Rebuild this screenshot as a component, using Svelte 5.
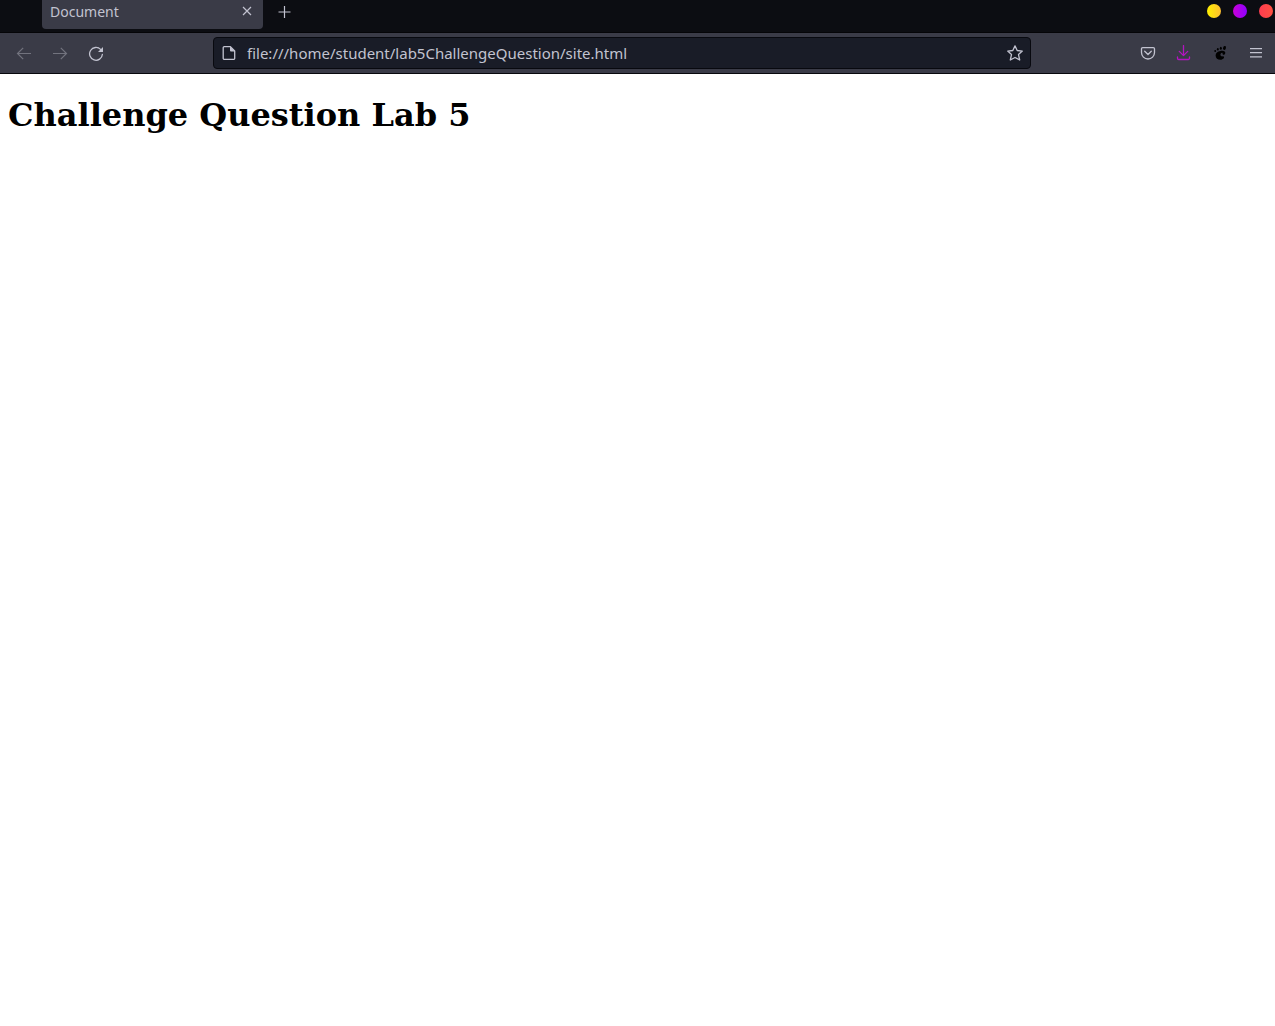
<script>
  let url = $state('file:///home/student/lab5ChallengeQuestion/site.html');
</script>

<svelte:head><title>Document</title></svelte:head>

<div class="browser">
  <header class="tabstrip">
    <div class="tab">
      <span class="title">Document</span>
      <button class="close" aria-label="Close tab">
        <svg width="16" height="16" viewBox="0 0 16 16"><path d="M4 4l8 8M12 4l-8 8" /></svg>
      </button>
    </div>
    <button class="newtab" aria-label="New tab">
      <svg width="16" height="16" viewBox="0 0 16 16"><path d="M8.500 2v12M2.500 8h12" /></svg>
    </button>
    <div class="window">
      <button class="dot min" aria-label="Minimize"></button>
      <button class="dot max" aria-label="Maximize"></button>
      <button class="dot quit" aria-label="Close window"></button>
    </div>
  </header>

  <nav class="toolbar">
    <div class="group">
      <button class="tool" disabled aria-label="Back">
        <svg width="16" height="16" viewBox="0 0 16 16"><path d="M15 8.500H1.500M7.200 2.800L1.500 8.500l5.700 5.700" /></svg>
      </button>
      <button class="tool" disabled aria-label="Forward">
        <svg width="16" height="16" viewBox="0 0 16 16"><path d="M1 8.500h13.500M8.800 2.800l5.700 5.700-5.700 5.700" /></svg>
      </button>
      <button class="tool" aria-label="Reload">
        <svg width="16" height="16" viewBox="0 0 16 16">
          <path class="bold" d="M12.600 4.400A6.400 6.400 0 1 0 14.400 9.300" />
          <path class="fill" d="M15 2v5H10z" />
        </svg>
      </button>
    </div>

    <div class="urlbar">
      <svg width="16" height="16" viewBox="0 0 16 16">
        <path class="bold" d="M3 1.700h6.400l4.300 4.300v7.200a1.200 1.200 0 0 1-1.200 1.200H3.400a1.200 1.200 0 0 1-1.200-1.200V2.900A1.200 1.200 0 0 1 3.400 1.700z" />
        <path class="fill" d="M9 1.500l5 5H10a1 1 0 0 1-1-1z" />
      </svg>
      <input type="text" aria-label="Address" spellcheck="false" bind:value={url} />
      <button class="star" aria-label="Bookmark this page">
        <svg width="16" height="16" viewBox="0 0 16 16">
          <path class="bold" d="M8 .9l2.200 4.600 5.100.6-3.800 3.500 1.200 5.400L8 12.500l-4.700 2.500 1.200-5.400L.7 6.100l5.100-.6z" />
        </svg>
      </button>
    </div>

    <div class="group right">
      <button class="tool" aria-label="Save to Pocket">
        <svg width="16" height="16" viewBox="0 0 16 16">
          <path class="bold" d="M2.700 2.600h10.600a1.200 1.200 0 0 1 1.200 1.200v3.700a6.500 6.500 0 0 1-13 0V3.800a1.200 1.200 0 0 1 1.200-1.200z" />
          <path class="bold" d="M4.700 6.300L8 9.500l3.300-3.200" />
        </svg>
      </button>
      <button class="tool download" aria-label="Downloads">
        <svg width="16" height="16" viewBox="0 0 16 16">
          <path class="bold" d="M7.500.6v9.900M3.300 6.400l4.200 4.200 4.200-4.200M1.500 12v1.300a1.200 1.200 0 0 0 1.200 1.200h9.600a1.200 1.200 0 0 0 1.200-1.200V12" />
        </svg>
      </button>
      <button class="tool gnome" aria-label="GNOME Shell integration">
        <svg width="16" height="16" viewBox="0 0 16 16">
          <path class="fill" d="M8.500 6c3.200-.5 5.300.5 4.700 2.400-.4 1.400-2 1.900-2.500.9-.4-.8.200-1.400-.5-1.500-1.200-.1-2.200 1.500-1.600 2.700.8 1.600 2.600.3 3.300 1.300.7 1.200-1.200 3-3.500 3-2.800 0-4.800-1.900-4.800-4.400C3.600 8 5.600 6.400 8.500 6z" />
          <ellipse cx="12.500" cy="2.900" rx="1.400" ry="2" transform="rotate(20 12.500 2.900)" />
          <ellipse cx="8.800" cy="3.200" rx="1" ry="1.500" />
          <ellipse cx="5.800" cy="4.300" rx=".9" ry="1.300" />
          <ellipse cx="3.200" cy="6" rx=".9" ry="1.100" />
        </svg>
      </button>
      <button class="tool" aria-label="Open application menu">
        <svg width="16" height="16" viewBox="0 0 16 16"><path class="lines" d="M2 3.600h12M2 7.700h12M2 11.800h12" /></svg>
      </button>
    </div>
  </nav>

  <main>
    <h1>Challenge Question Lab 5</h1>
  </main>
</div>

<style>
  :global(body) {
    margin: 0;
    background: #fff;
  }
  .browser {
    min-height: 100vh;
    font-family: 'Noto Sans', 'Open Sans', sans-serif;
    color: #c2c3d0;
  }
  button {
    display: flex;
    align-items: center;
    justify-content: center;
    padding: 0;
    border: 0;
    background: none;
    color: inherit;
  }
  svg {
    flex: none;
    fill: none;
    stroke: currentColor;
    stroke-width: 1.2;
  }
  .bold {
    stroke-width: 1.3;
    stroke-linejoin: round;
    stroke-linecap: round;
  }
  .lines {
    stroke-width: 1.3;
  }
  .fill {
    fill: currentColor;
    stroke: none;
  }
  .tabstrip {
    display: flex;
    align-items: flex-start;
    height: 32px;
    padding: 0 2px 0 42px;
    background: #0c0d12;
    border-bottom: 1px solid #050508;
  }
  .tab {
    display: flex;
    align-items: flex-start;
    justify-content: space-between;
    box-sizing: border-box;
    width: 221px;
    height: 29px;
    padding: 2px 8px;
    border-radius: 0 0 4px 4px;
    background: #3a3b47;
  }
  .title {
    font-size: 14px;
    line-height: 20px;
  }
  .close {
    height: 18px;
  }
  .newtab {
    height: 24px;
    margin-left: 13px;
  }
  .window {
    display: flex;
    gap: 12px;
    margin-left: auto;
    padding-top: 4px;
  }
  .dot {
    width: 14px;
    height: 14px;
    border-radius: 50%;
  }
  .min {
    background: linear-gradient(90deg, #fff000, #ffbe30);
  }
  .max {
    background: linear-gradient(90deg, #c800d8, #9000ff);
  }
  .quit {
    background: linear-gradient(90deg, #ff3c50, #ff5040);
  }
  .toolbar {
    display: flex;
    align-items: center;
    height: 40px;
    padding: 0 1px 0 6px;
    background: #3a3b47;
    border-bottom: 1px solid #08080d;
  }
  .group {
    display: flex;
    flex: 207 1 0;
  }
  .right {
    flex-grow: 243;
    justify-content: flex-end;
  }
  .tool {
    width: 36px;
    height: 32px;
  }
  .tool:disabled {
    color: #72737e;
  }
  .download {
    color: #b414c0;
  }
  .gnome {
    color: #000;
  }
  .gnome ellipse {
    fill: currentColor;
    stroke: none;
  }
  .urlbar {
    display: flex;
    flex: 802 1 0;
    align-items: center;
    box-sizing: border-box;
    height: 32px;
    padding: 0 7px;
    border: 1px solid #08090f;
    border-radius: 4px;
    background: #191c27;
  }
  input {
    flex: 1;
    min-width: 0;
    padding: 0 10px;
    border: 0;
    outline: 0;
    background: none;
    color: inherit;
    font: 15px/20px 'Noto Sans', 'Open Sans', sans-serif;
  }
  main {
    padding: 21px 8px;
  }
  h1 {
    margin: 0;
    color: #000;
    font: bold 32px/40px 'DejaVu Serif', serif;
  }
</style>
